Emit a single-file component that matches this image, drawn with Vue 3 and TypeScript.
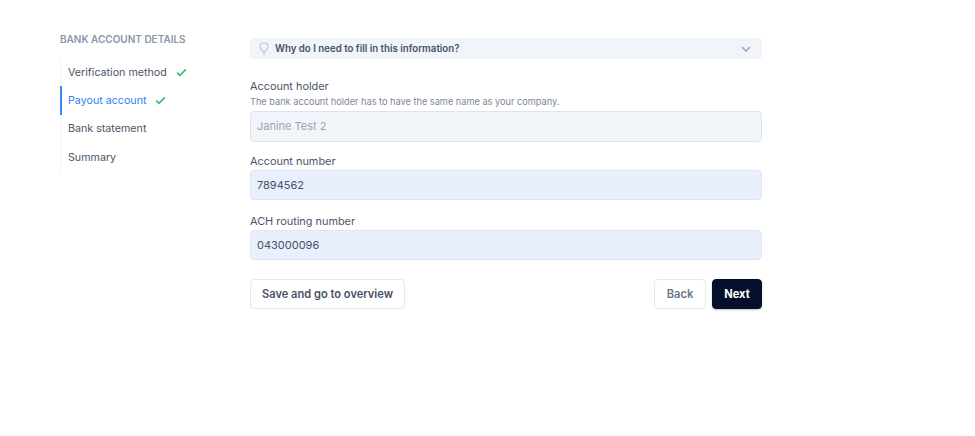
<script setup lang="ts">
const steps = [
  { label: 'Verification method', done: true, active: false },
  { label: 'Payout account', done: true, active: true },
  { label: 'Bank statement', done: false, active: false },
  { label: 'Summary', done: false, active: false },
]
</script>

<template>
  <div class="page">
    <aside class="side">
      <h2 class="side-title">BANK ACCOUNT DETAILS</h2>
      <ul class="steps">
        <li v-for="s in steps" :key="s.label" class="step" :class="{ active: s.active }">
          <span>{{ s.label }}</span>
          <svg v-if="s.done" class="check" width="11" height="9" viewBox="0 0 12 10" fill="none">
            <path d="M1.2 5.2 4.3 8.2 10.8 1.6" stroke="#2fc46b" stroke-width="1.8" />
          </svg>
        </li>
      </ul>
    </aside>
    <main class="form">
      <div class="info">
        <div class="info-left">
          <svg width="10" height="14" viewBox="0 0 10 14" fill="none" stroke="#bcc5d0" stroke-width="1.1">
            <path d="M3.2 9.2C3 7.8 1 7 1 4.6 1 2.4 2.8 1 5 1s4 1.4 4 3.6C9 7 7 7.8 6.8 9.2Z" />
            <path d="M3.6 11h2.8M4.2 12.8h1.6" />
          </svg>
          <span>Why do I need to fill in this information?</span>
        </div>
        <svg width="10" height="6" viewBox="0 0 10 6" fill="none">
          <path d="M1 1 5 5 9 1" stroke="#9aa5b6" stroke-width="1.6" />
        </svg>
      </div>

      <div class="field first">
        <label>Account holder</label>
        <p class="hint">The bank account holder has to have the same name as your company.</p>
        <div class="input disabled">Janine Test 2</div>
      </div>
      <div class="field second">
        <label>Account number</label>
        <div class="input filled">7894562</div>
      </div>
      <div class="field third">
        <label>ACH routing number</label>
        <div class="input filled">043000096</div>
      </div>

      <div class="actions">
        <button class="btn save">Save and go to overview</button>
        <div class="right">
          <button class="btn back">Back</button>
          <button class="btn next">Next</button>
        </div>
      </div>
    </main>
  </div>
</template>

<style>
html, body { background: #fff; }
</style>

<style scoped>
.page {
  display: flex;
  width: 975px;
  height: 436px;
  box-sizing: border-box;
  padding: 33px 0 0 60px;
  font-family: Inter, "Liberation Sans", sans-serif;
  background: #fff;
  overflow: hidden;
}
.side { width: 190px; flex: none; }
.side-title {
  margin: 0 0 13px;
  font-size: 10px;
  line-height: 12px;
  font-weight: 600;
  color: #8b96a8;
}
.steps {
  list-style: none;
  margin: 0;
  padding: 0;
  width: 140px;
  border-left: 1px solid #f1f3f6;
}
.step {
  display: flex;
  align-items: center;
  gap: 9px;
  height: 28.4px;
  padding-left: 6px;
  margin-left: -1px;
  border-left: 2px solid transparent;
  box-sizing: border-box;
  font-size: 10.7px;
  white-space: nowrap;
  color: #4b5568;
}
.step.active { border-left-color: #3f86f5; color: #2f7ef0; }
.form { width: 512px; flex: none; padding-top: 5px; }
.info {
  display: flex;
  align-items: center;
  justify-content: space-between;
  height: 21px;
  padding: 0 11px 0 9px;
  background: #f1f4f8;
  border-radius: 4px;
  font-size: 9.7px;
  font-weight: 600;
  color: #465166;
}
.info-left { display: flex; align-items: center; gap: 6px; }
.field.first { margin-top: 20px; }
.field.second { margin-top: 12px; }
.field.third { margin-top: 13.5px; }
label {
  display: block;
  font-size: 10.9px;
  line-height: 14px;
  color: #4b5568;
  margin-bottom: 2px;
}
.hint {
  margin: 0 0 3px;
  font-size: 9.2px;
  line-height: 13px;
  color: #7c8799;
}
.input {
  height: 30.5px;
  box-sizing: border-box;
  display: flex;
  align-items: center;
  padding: 0 6px;
  border-radius: 4px;
  font-size: 11px;
  border: 1px solid #dfe4ec;
}
.disabled { background: #f1f4f8; color: #9aa5b6; }
.filled { background: #e9effc; color: #465166; border-color: #dfe6f3; }
.actions {
  display: flex;
  justify-content: space-between;
  margin-top: 18.5px;
}
.right { display: flex; gap: 6px; }
.btn {
  height: 30.5px;
  box-sizing: border-box;
  border-radius: 4px;
  font-family: inherit;
  font-size: 11.1px;
  font-weight: 600;
  padding: 0;
  border: 1px solid #e6e9ee;
  background: #fff;
  color: #465166;
}
.save { width: 155px; }
.back { width: 52px; color: #67738a; }
.next { width: 50px; background: #050f2c; border-color: #050f2c; color: #fff; font-weight: 700; box-shadow: 0 1px 2px rgba(5, 15, 44, 0.25); }
</style>
